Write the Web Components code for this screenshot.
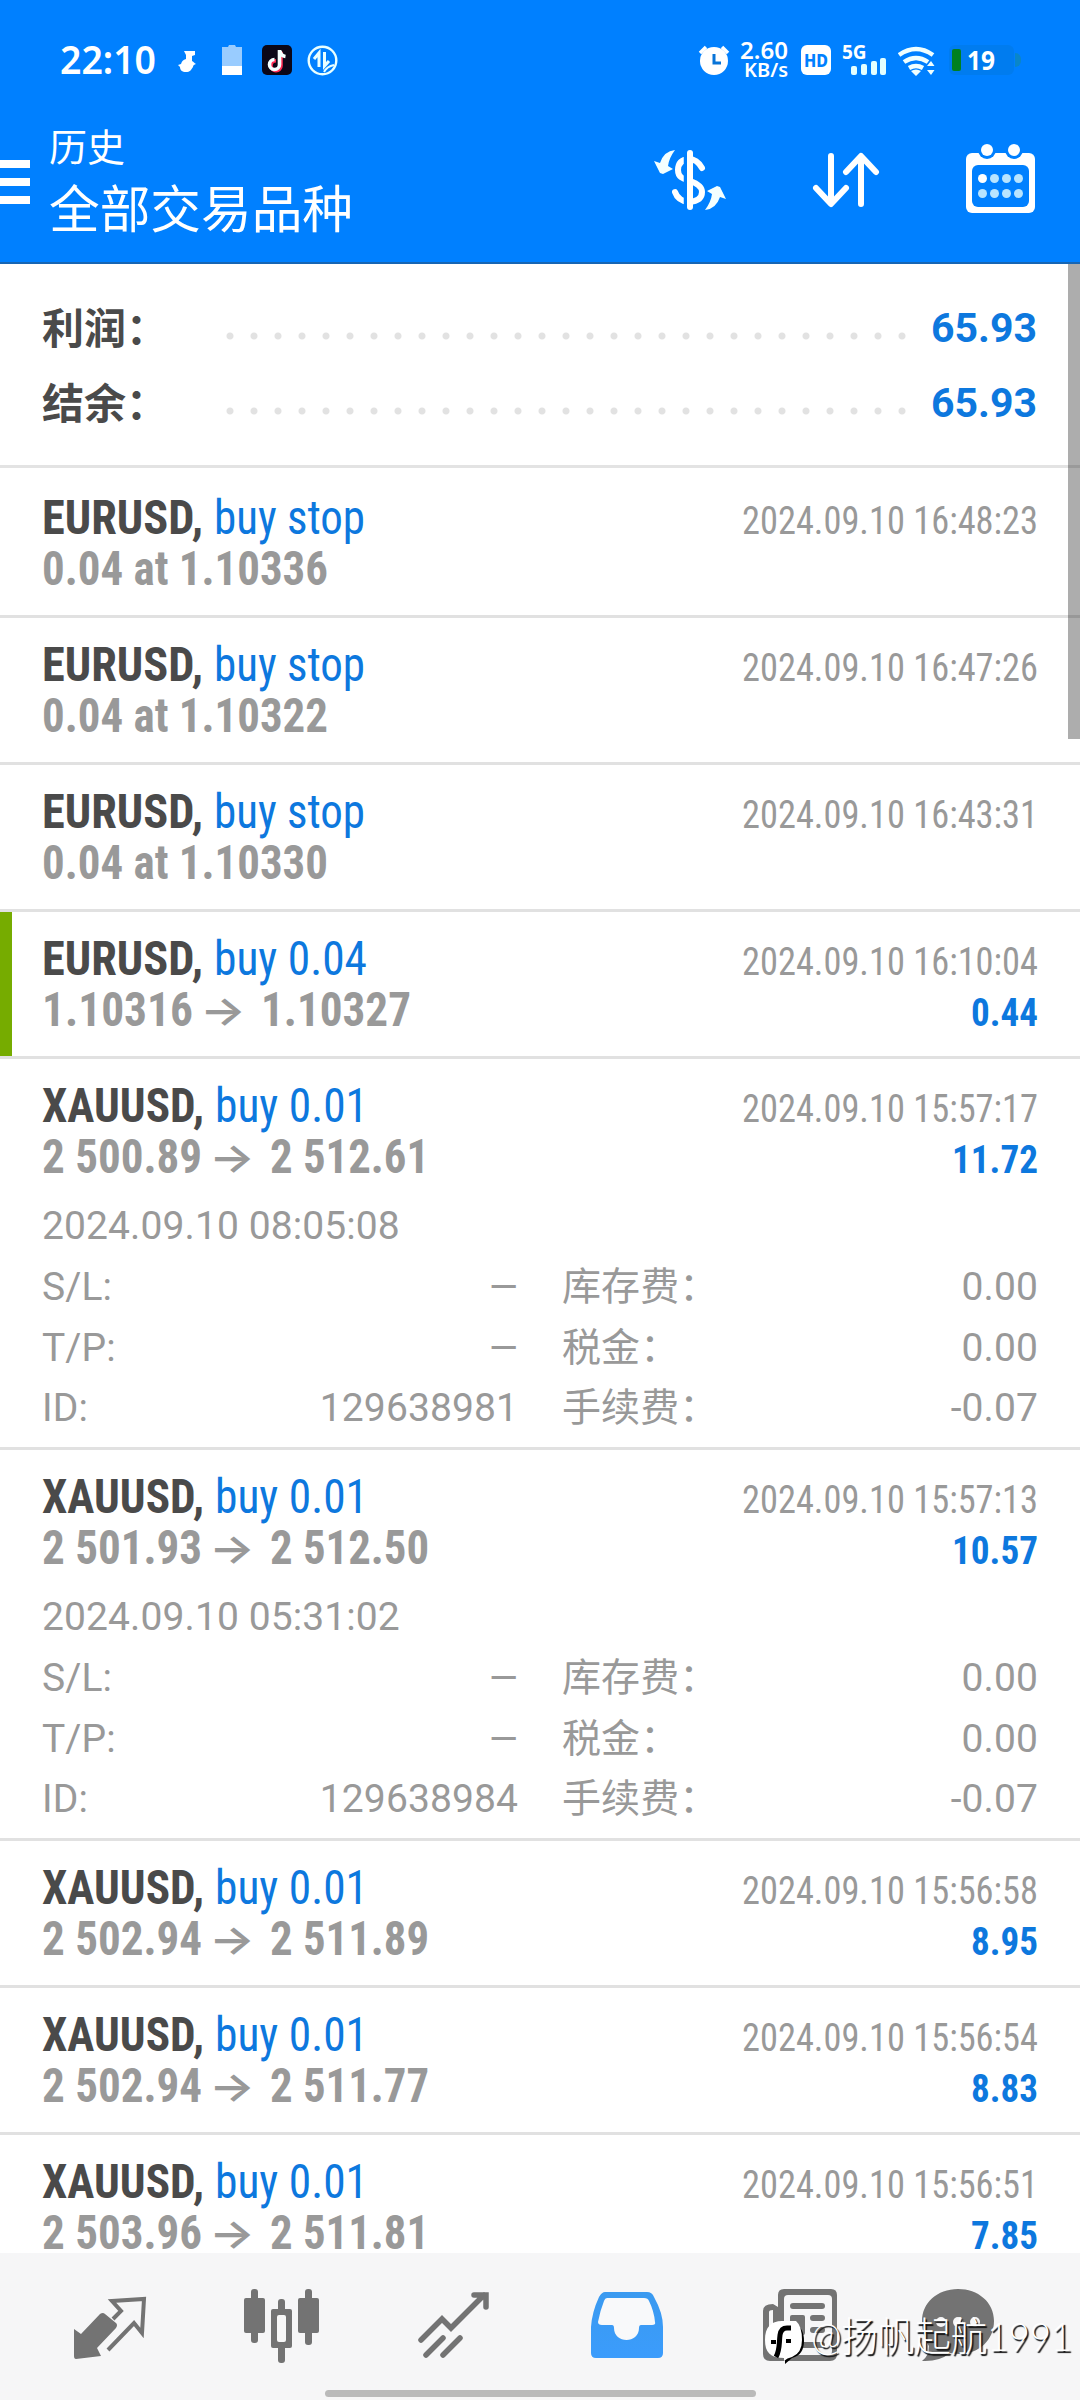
<!DOCTYPE html>
<html lang="zh-CN">
<head>
<meta charset="utf-8">
<title>历史</title>
<style>
html,body{margin:0;padding:0}
body{width:1080px;height:2400px;overflow:hidden;background:#fff;font-family:Roboto,"Noto Sans CJK SC",sans-serif;color:#999}
</style>
</head>
<body>
<history-app></history-app>
<script>
const define=(name,css,html,after)=>customElements.define(name,class extends HTMLElement{
  constructor(){super();this.attachShadow({mode:'open'});}
  connectedCallback(){
    this.shadowRoot.innerHTML=`<style>${css}</style>`+(typeof html==='function'?html(this):html);
    if(after)after(this);
  }
});

/* A run of text set to a given width */
define('fit-text',`
:host{display:inline-block;white-space:pre;text-align:left}
span{display:inline-block;transform-origin:0 50%}`,
'<span><slot></slot></span>',
el=>{
  const s=el.shadowRoot.querySelector('span');
  const w=+el.getAttribute('w'),n=s.offsetWidth?s.getBoundingClientRect().width:w;
  s.style.transform=`scaleX(${w/n})`;
  el.style.width=w+'px';
  s.style.marginRight=(w-n)+'px';
});

define('status-bar',`
:host{display:flex;height:110px;align-items:flex-start;color:#fff;font-family:"Noto Sans",sans-serif;font-weight:600}
svg{display:block;flex:none}
.time{font-size:39px;line-height:40px;margin:39px 0 0 60px}
.rate{display:flex;flex-direction:column;align-items:flex-end;margin:38px 0 0 10px}
.rate fit-text{height:20px}
.hd{display:flex;align-items:center;justify-content:center;width:30px;height:30px;border-radius:6px;background:#fff;color:#0080ff;font:800 18px/30px "Noto Sans",sans-serif;margin:45px 0 0 13px}
.net{display:flex;flex-direction:column;margin:42px 0 0 11px;width:46px}
.net b{font:700 19px/20px "Noto Sans",sans-serif;height:17px}
.net svg{margin-left:9px;margin-top:-1px}
.bat{display:flex;align-items:center;margin:45px 0 0 13px;height:30px}
.cell{display:flex;align-items:center;width:65px;height:30px;border-radius:6px;background:rgba(0,110,180,.22);box-sizing:border-box;padding-left:3px}
.cell i{width:9px;height:22px;background:#00801f;border-radius:2px}
.cell fit-text{font-size:26px;font-weight:700;line-height:30px;margin-left:6px}
.tip{width:6px;height:14px;border-radius:0 6px 6px 0;background:#0a86c8;margin-left:1px}
`,`
<fit-text class="time" w="96">22:10</fit-text>
<svg width="18" height="22" viewBox="178 50 18 22" style="margin:50px 0 0 22px" fill="#fff"><path d="M184 51h11v4l-3 1v5c2 1 2 2 4 3-2 1-3 1-3 3-2 3-3 5-7 5s-6-2-6-5l-2-2 3-1c1-3 2-4 5-5v-4z"/></svg>
<svg width="20" height="31" viewBox="222 45 20 31" style="margin:45px 0 0 26px"><path d="M222 47h6l1-2h6l1 2h6v19h-20z" fill="#99ccff"/><path d="M222 66h20v9h-20z" fill="#fff"/></svg>
<svg width="30" height="30" viewBox="0 0 30 30" style="margin:45px 0 0 20px"><rect width="30" height="30" rx="5" fill="#0b0718"/><g fill="none" stroke-width="3.6"><path d="M18 6v14a5 5 0 1 1-5-5" stroke="#ff2c55" transform="translate(1 .7)"/><path d="M17.500 5v14.500a5 5 0 1 1-5-5M18 6c.5 3 2 5 5.500 5.500" stroke="#f4ffff"/></g></svg>
<svg width="32" height="32" viewBox="0 0 32 32" style="margin:45px 0 0 15px" fill="none" stroke="#e9ffff" stroke-width="2.400"><circle cx="15.500" cy="15.500" r="13.800"/><path d="M12 22V8l-5 6M17.500 7v14l4.500-5" stroke-width="3"/><path d="M17 27c2-4 5-6 10-7" stroke-width="2"/></svg>
<svg width="32" height="31" viewBox="698 45 32 31" style="margin:45px 0 0 359px"><circle cx="714" cy="61" r="14" fill="#fff"/><path d="M700 53l6-6M728 53l-6-6" stroke="#fff" stroke-width="3.500"/><path d="M714 54v9h7" stroke="#0874d8" stroke-width="3" fill="none"/></svg>
<div class="rate"><fit-text w="48" style="font-size:23.500px;line-height:25px">2.60</fit-text><fit-text w="44" style="font-size:20.500px;line-height:22px">KB/s</fit-text></div>
<div class="hd"><fit-text w="24">HD</fit-text></div>
<div class="net"><b>5G</b><svg width="36" height="17" viewBox="0 0 36 17" fill="#e4ffff"><rect y="8" width="6" height="9" rx="2"/><rect x="10" y="6" width="6" height="11" rx="2"/><rect x="20" y="3" width="6" height="14" rx="2"/><rect x="29" width="6" height="17" rx="2"/></svg></div>
<svg width="38" height="30" viewBox="900 46 38 30" style="margin:46px 0 0 10px"><g fill="none" stroke="#f0ffff" stroke-width="4.500"><path d="M901 55q17-12 34 0M906 62q12-8 24 0M911 68q7-4 14 0"/></g><path d="M913 71q5-3 10 0l-5 5zM929 66l4-5 3.500 5zM929 70h7.500l-3.500 5z" fill="#f0ffff"/></svg>
<div class="bat"><div class="cell"><i></i><fit-text w="28">19</fit-text></div><div class="tip"></div></div>
`);

define('app-header',`
:host{display:flex;height:154px;box-sizing:border-box;border-bottom:2px solid #1766b4;color:#fff;align-items:flex-start}
svg{display:block;flex:none}
.menu{display:flex;flex-direction:column;gap:10px;margin-top:50px;width:30px}
.menu i{height:8px;background:#fff}
.t{display:flex;flex-direction:column;margin-left:19px;width:310px;margin-top:14px;font-family:"Noto Sans CJK SC",sans-serif;font-weight:400}
.a{font-size:38px;line-height:42px}
.b{font-size:51px;line-height:60px;margin-top:10px}
`,`
<div class="menu"><i></i><i></i><i></i></div>
<div class="t"><fit-text class="a" w="76">历史</fit-text><fit-text class="b" w="304">全部交易品种</fit-text></div>
<svg width="76" height="64" viewBox="652 148 76 64" style="margin:38px 0 0 293px"><path d="M702 168q-5-9-13-9-11 1-11 11c0 8 6 9 12 11q12 4 12 11 0 9-13 10-11-1-14-10" fill="none" stroke="#fff" stroke-width="6" stroke-linecap="round"/><path d="M685.500 152v56" stroke="#0080ff" stroke-width="3.500"/><path d="M690 153v54" stroke="#fff" stroke-width="6" stroke-linecap="round"/><g fill="#f4ffff"><path d="M675 150q-11 1-15 13l-6-2 6 12 3 1 10-5-5-3q1-8 7-16z"/><path transform="rotate(180 690 180)" d="M675 150q-11 1-15 13l-6-2 6 12 3 1 10-5-5-3q1-8 7-16z"/></g></svg>
<svg width="68" height="58" viewBox="812 151 68 58" style="margin:41px 0 0 84px" fill="none" stroke="#fff" stroke-width="6" stroke-linecap="round" stroke-linejoin="round"><path d="M831 156v46M816 188l15 16 15-16M861 204v-46M846 172l15-16 15 16"/></svg>
<svg width="70" height="72" viewBox="966 143 70 72" style="margin:33px 0 0 86px"><rect x="966" y="153" width="69" height="60" rx="6" fill="#fff"/><g fill="#0080ff"><circle cx="987" cy="150" r="9"/><circle cx="1014" cy="150" r="9"/><rect x="972" y="165" width="57" height="42" rx="6"/></g><g fill="#fff"><circle cx="987" cy="150" r="6"/><circle cx="1014" cy="150" r="6"/><circle cx="982.500" cy="178.500" r="4.500"/></g><g fill="#b8e4ff"><circle cx="994.500" cy="178.500" r="4.500"/><circle cx="1006.500" cy="178.500" r="4.500"/><circle cx="1018.500" cy="178.500" r="4.500"/><circle cx="982.500" cy="193.500" r="4.500"/><circle cx="994.500" cy="193.500" r="4.500"/><circle cx="1006.500" cy="193.500" r="4.500"/><circle cx="1018.500" cy="193.500" r="4.500"/></g></svg>
`);

define('summary-line',`
:host{display:flex;height:75px;align-items:center;padding:0 41px 0 42px}
.l{font:700 42px/75px "Noto Sans CJK SC",sans-serif;color:#4a4a4a;width:184px;white-space:nowrap;height:81px}
.d{width:680px;height:8px;margin-top:14px;background:radial-gradient(circle at 4px 4px,#e2e2e2 3px,transparent 4px) 0 0/24px 8px repeat-x}
fit-text{font:700 41px/75px Roboto;color:#0d78de;margin-left:25px}
`,`<span class="l"><slot name="label"></slot></span><div class="d"></div><fit-text w="108"><slot></slot></fit-text>`,
el=>{el.shadowRoot.querySelector('fit-text').textContent=el.getAttribute('value')});

define('deal-row',`
:host{display:flex;border-bottom:3px solid #e1e1e1;background:#fff}
.bar{width:12px;background:transparent}
:host([open]) .bar{background:#76ac00}
.body{flex:1;display:flex;flex-direction:column;padding:21px 42px 0 30px}
.ln{display:flex;align-items:baseline;height:51px;line-height:51px;font-size:48px;font-stretch:75%;font-weight:700;white-space:pre}
.sym{color:#4a4a4a}
.act{color:#0d78de;font-weight:400;margin-left:11px}
.date,.pr{margin-left:auto;font-size:39px}
.date{font-weight:400}
.pr{color:#0d78de}
.arr{font:600 40px/51px Inter,sans-serif;font-stretch:100%;margin:0 15px 0 7px;transform:translateY(-1px)}
.pad{height:21px}
:host([details]) .pad{height:0}
.det{font-size:39px;font-weight:400;letter-spacing:.1px;color:#999;margin-top:14px;height:251px;line-height:61px}
.det .g{display:grid;grid-template-columns:476px 476px;column-gap:44px;grid-auto-rows:60.600px}
.c{display:flex;justify-content:space-between;align-items:baseline}
.c .k{font-family:Roboto,"Noto Sans CJK SC",sans-serif}
`,el=>{
  const a=n=>el.getAttribute(n);
  const x=a('sym')==='XAUUSD';
  const row2=a('to')?`<fit-text class="p" w="${x?160:151}">${a('from')}</fit-text><fit-text class="arr" w="46">→</fit-text><fit-text class="p" w="${x?159:150}">${a('to')}</fit-text><fit-text class="pr" w="${a('pr').length>4?86:67}">${a('pr')}</fit-text>`
   :`<fit-text w="286">${a('from')}</fit-text>`;
  const det=a('details');
  let d='';
  if(det){const [t,id]=det.split('|');
    d=`<div class="det"><div>${t}</div><div class="g">
    <div class="c"><span>S/L:</span><fit-text w="29">—</fit-text></div><div class="c"><span class="k">库存费：</span><span>0.00</span></div>
    <div class="c"><span>T/P:</span><fit-text w="29">—</fit-text></div><div class="c"><span class="k">税金：</span><span>0.00</span></div>
    <div class="c"><span>ID:</span><span>${id}</span></div><div class="c"><span class="k">手续费：</span><span>-0.07</span></div></div></div>`;}
  return `<div class="bar"></div><div class="body"><div class="ln"><fit-text class="sym" w="${x?162:161}">${a('sym')},</fit-text><fit-text class="act" w="${a('act')==='buy stop'?151:153}">${a('act')}</fit-text><fit-text class="date" w="296">2024.09.10 ${a('time')}</fit-text></div><div class="ln">${row2}</div>${d}<div class="pad"></div></div>`;
});

define('tab-bar',`
:host{display:flex;flex-direction:column;align-items:center;height:147px;background:#f6f6f7}
nav{display:flex;width:1080px;height:137px;align-items:flex-start}
svg{display:block;flex:none;margin-top:34px}
.home{width:431px;height:7px;border-radius:4px;background:#bababa}
`,`
<nav>
<svg width="76" height="76" viewBox="72 2287 76 76" style="margin-left:72px"><path d="M74 2329l7 5 19-20q3-2 5 0l11 9q2 2 0 5l-19 20 4 8-25 3q-2 0-2-3z" fill="#737373"/><path d="M113 2319l8-8-9-10 32-2-2 34-8-10-26 27" fill="none" stroke="#737373" stroke-width="4"/></svg>
<svg width="78" height="78" viewBox="242 2287 78 78" style="margin-left:94px"><g fill="#737373"><rect x="244" y="2298" width="21" height="35" rx="2"/><rect x="251" y="2289" width="7" height="54" rx="3"/><rect x="298" y="2298" width="21" height="35" rx="2"/><rect x="305" y="2289" width="7" height="56" rx="3"/><rect x="271" y="2309" width="21" height="39" rx="2"/><rect x="278" y="2299" width="7" height="64" rx="3"/></g><rect x="277" y="2315" width="9" height="27" rx="2" fill="#f8f8f8"/></svg>
<svg width="76" height="76" viewBox="416 2287 76 76" style="margin-left:96px" fill="none" stroke="#737373" stroke-width="5.500" stroke-linecap="round"><path d="M421 2340l21-21 9 9 33-33M474 2295h12v12M426 2355l17-17M443 2355l17-17"/></svg>
<svg width="76" height="76" viewBox="589 2287 76 76" style="margin-left:97px"><defs><linearGradient id="g" x1="0" y1="0" x2="0" y2="1"><stop stop-color="#3a9af0"/><stop offset="1" stop-color="#3b9cfc"/></linearGradient></defs><path d="M605 2292h42q5 0 7 5 9 16 9 30v26q0 5-5 5h-62q-5 0-5-5v-26q1-15 8-30 3-5 6-5z" fill="url(#g)"/><path d="M607 2298h37q4 0 5 3 5 10 6 21 1 3-3 3h-11q-2 0-2 3c0 16-25 16-25 0q0-3-2-3h-10q-4 0-4-3 2-11 6-21 1-3 3-3z" fill="#f8f9fa"/></svg>
<svg width="76" height="76" viewBox="762 2287 76 76" style="margin-left:97px"><path d="M773 2304q-10 0-10 7v43q0 7 7 7h60q7 0 7-7v-59q0-6-6-6h-47q-6 0-6 6v12z" fill="#737373"/><rect x="784" y="2295" width="48" height="60" rx="4" fill="#f6f6f7"/><path d="M769 2312q0-2 4-2v35q0 4-2 4t-2-3z" fill="#f6f6f7"/><path d="M793 2306h29M813 2318h9M813 2330h9M793 2345h29" stroke="#737373" stroke-width="6" stroke-linecap="round"/><rect x="790" y="2315" width="15" height="20" rx="2" fill="#737373"/></svg>
<svg width="78" height="78" viewBox="920 2287 78 78" style="margin-left:82px"><path d="M958 2289c20 0 36 13 36 32s-15 33-35 33q-5 0-9-1-11 9-28 8 7-5 7-15-7-10-7-25c0-18 15-32 36-32z" fill="#737373"/><g fill="#f6f6f7"><circle cx="941" cy="2322" r="5"/><circle cx="958" cy="2322" r="5"/><circle cx="975" cy="2322" r="5"/></g></svg>
</nav>
<div class="home"></div>
`);

define('water-mark',`
:host{position:absolute;left:762px;top:2306px;display:flex;align-items:flex-start;color:#fff}
svg{margin-top:13px;display:block}
fit-text{font:300 40px/60px Lato,"Noto Sans CJK SC",sans-serif;text-shadow:2px 2px 1px #111;margin-left:4px}
`,`<svg width="45" height="46" viewBox="0 0 45 46"><path d="M24 5h8q10 3 10 17 0 14-12 17l-7 6v-6h4l-11-1z" fill="#000"/><path d="M20 2h14q6 5 6 19 0 13-10 17-5 1-8 4v-3C8 39 3 33 3 21 3 8 9 2 20 2z" fill="#fff"/><path d="M29 9h-4q-6 0-7 7c-1 8 0 15-4 22" fill="none" stroke="#000" stroke-width="5"/><path d="M9 21h5v4h-5zM24 20h5v4h-5z"/></svg><fit-text w="261">@扬帆起航1991</fit-text>`);

define('history-app',`
:host{display:flex;flex-direction:column;width:1080px;height:2400px;position:relative;background:#fff}
.top{background:#0080ff}
.list{height:1989px;overflow:hidden;position:relative}
.sum{box-sizing:border-box;padding-top:27px;border-bottom:3px solid #e3e3e3;height:204px}
.first{padding-top:3px}
.sb{position:absolute;right:0;top:0;width:12px;height:475px;background:rgba(0,0,0,.32)}
`,`
<div class="top"><status-bar></status-bar><app-header></app-header></div>
<div class="list">
<div class="sum"><summary-line value="65.93"><span slot="label">利润：</span></summary-line><summary-line value="65.93"><span slot="label">结余：</span></summary-line></div>
<div class="first"><deal-row sym="EURUSD" act="buy stop" time="16:48:23" from="0.04 at 1.10336"></deal-row></div>
<deal-row sym="EURUSD" act="buy stop" time="16:47:26" from="0.04 at 1.10322"></deal-row>
<deal-row sym="EURUSD" act="buy stop" time="16:43:31" from="0.04 at 1.10330"></deal-row>
<deal-row open sym="EURUSD" act="buy 0.04" time="16:10:04" from="1.10316" to="1.10327" pr="0.44"></deal-row>
<deal-row sym="XAUUSD" act="buy 0.01" time="15:57:17" from="2 500.89" to="2 512.61" pr="11.72" details="2024.09.10 08:05:08|129638981"></deal-row>
<deal-row sym="XAUUSD" act="buy 0.01" time="15:57:13" from="2 501.93" to="2 512.50" pr="10.57" details="2024.09.10 05:31:02|129638984"></deal-row>
<deal-row sym="XAUUSD" act="buy 0.01" time="15:56:58" from="2 502.94" to="2 511.89" pr="8.95"></deal-row>
<deal-row sym="XAUUSD" act="buy 0.01" time="15:56:54" from="2 502.94" to="2 511.77" pr="8.83"></deal-row>
<deal-row sym="XAUUSD" act="buy 0.01" time="15:56:51" from="2 503.96" to="2 511.81" pr="7.85"></deal-row>
<div class="sb"></div>
</div>
<tab-bar></tab-bar>
<water-mark></water-mark>
`);
</script>
</body>
</html>
